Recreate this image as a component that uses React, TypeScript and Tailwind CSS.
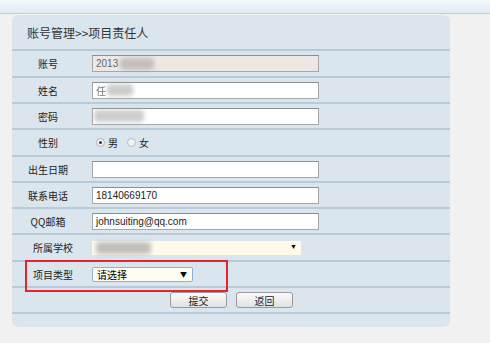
import React from "react";

const cjk = { fontFamily: '"SimSun","Noto Sans CJK SC",sans-serif' };
const arial = { fontFamily: '"Liberation Sans",Arial,sans-serif' };

function Blur({ w, className = "" }: { w: number; className?: string }) {
  return (
    <div
      className={"h-[12px] rounded-sm bg-[#9a9a9a] blur-[2px] opacity-70 " + className}
      style={{ width: w }}
    />
  );
}

function TextInput({ children, bg = "bg-white" }: { children?: React.ReactNode; bg?: string }) {
  return (
    <div
      className={
        "flex h-[17px] w-[227px] items-center border border-[#a7a7a7] border-t-[#8e8e8e] px-[3px] text-[10px] text-[#222] " +
        bg
      }
      style={arial}
    >
      {children}
    </div>
  );
}

function Row({
  label,
  h,
  children,
  labelCls = "w-[72px] justify-center",
}: {
  label?: string;
  h: string;
  children?: React.ReactNode;
  labelCls?: string;
}) {
  return (
    <div className={"flex items-center border-t-2 border-[#b9cbd8] " + h}>
      <div className={"flex shrink-0 text-[10px] text-[#222] " + labelCls} style={cjk}>
        {label}
      </div>
      <div className="ml-[8px] flex items-center">{children}</div>
    </div>
  );
}

export default function App() {
  return (
    <div className="h-[343px] w-[490px] overflow-hidden bg-[#f1f1f1]">
      <div className="h-[14px] border-b border-[#c4cdd4] bg-gradient-to-b from-[#f4f9fc] to-[#dfeaf1]" />
      <div className="ml-[12px] mt-[1px] w-[438px] rounded-[6px] bg-[#dbe5ed]">
        <div className="flex h-[34px] items-center pl-[15px] pt-[2px] text-[12px] text-[#333]" style={cjk}>
          账号管理&gt;&gt;项目责任人
        </div>
        <Row label="账号" h="h-[27px]">
          <TextInput bg="bg-[#ece9e4]">
            <span className="text-[#666]">2013</span>
            <Blur w={34} className="ml-[2px] bg-[#b0b0b0]" />
          </TextInput>
        </Row>
        <Row label="姓名" h="h-[26px]">
          <TextInput>
            <span className="text-[#777] blur-[0.6px]" style={cjk}>任</span>
            <Blur w={26} className="ml-[1px] bg-[#b8b8b8]" />
          </TextInput>
        </Row>
        <Row label="密码" h="h-[26px]">
          <TextInput>
            <Blur w={50} className="-ml-[2px] bg-[#b8b8b8]" />
          </TextInput>
        </Row>
        <Row label="性别" h="h-[27px]">
          <div className="flex items-center pl-[4px] text-[10px] text-[#222]" style={cjk}>
            <span className="flex h-[9px] w-[9px] items-center justify-center rounded-full border border-[#b0b0b0] bg-[#f4f4f4]">
              <span className="h-[3px] w-[3px] rounded-full bg-[#333]" />
            </span>
            <span className="ml-[3px]">男</span>
            <span className="ml-[9px] h-[9px] w-[9px] rounded-full border border-[#b8b8b8] bg-[#f2f2f2]" />
            <span className="ml-[3px]">女</span>
          </div>
        </Row>
        <Row label="出生日期" h="h-[26px]">
          <TextInput />
        </Row>
        <Row label="联系电话" h="h-[26px]">
          <TextInput>18140669170</TextInput>
        </Row>
        <Row label="QQ邮箱" h="h-[26px]">
          <TextInput>johnsuiting@qq.com</TextInput>
        </Row>
        <Row label="所属学校" h="h-[27px]" labelCls="w-[72px] pl-[21px]">
          <div className="flex h-[14px] w-[209px] items-center justify-between bg-[#fff9e9] pl-[4px] pr-[4px]">
            <Blur w={55} className="bg-[#a8a8a8]" />
            <span className="text-[7px] text-black">▼</span>
          </div>
        </Row>
        <div className="relative h-[26px] border-t-2 border-[#b9cbd8]">
          <div className="flex h-full items-center">
            <div className="w-[72px] shrink-0 pl-[21px] text-[10px] text-[#222]" style={cjk}>
              项目类型
            </div>
            <div
              className="ml-[8px] flex h-[15px] w-[101px] items-center justify-between rounded-[2px] border border-[#8fb0d6] bg-[#fdfdf4] pl-[4px] pr-[5px] text-[10px] text-black"
              style={cjk}
            >
              <span>请选择</span>
              <span className="text-[7px]">▼</span>
            </div>
          </div>
          <div className="absolute left-[13px] top-[-2px] h-[32px] w-[203px] border-2 border-[#e3262e]" />
        </div>
        <div className="flex h-[26px] items-center border-t-2 border-[#b9cbd8] pl-[158px]">
          <button
            className="flex h-[16px] w-[57px] items-center justify-center rounded-[3px] border border-[#9a9a9a] bg-gradient-to-b from-[#fbfbfb] to-[#e2e2e2] text-[10px] text-[#222]"
            style={cjk}
          >
            提交
          </button>
          <button
            className="ml-[9px] flex h-[16px] w-[57px] items-center justify-center rounded-[3px] border border-[#9a9a9a] bg-gradient-to-b from-[#fbfbfb] to-[#e2e2e2] text-[10px] text-[#222]"
            style={cjk}
          >
            返回
          </button>
        </div>
        <div className="h-[15px] border-t-2 border-[#b9cbd8]" />
      </div>
    </div>
  );
}
